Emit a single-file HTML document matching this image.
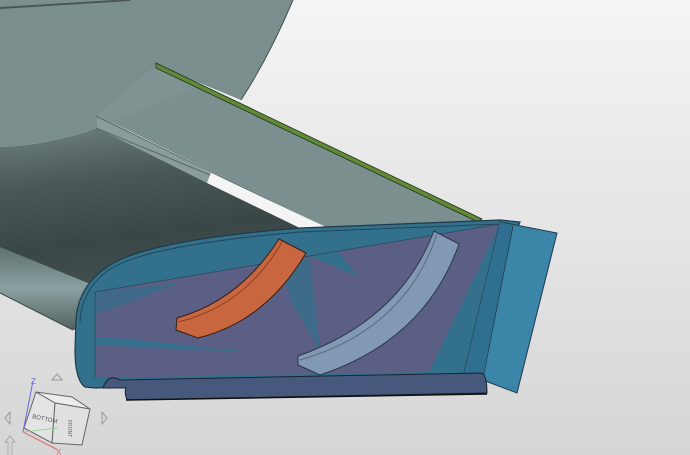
<!DOCTYPE html>
<html><head><meta charset="utf-8"><style>
html,body{margin:0;padding:0;width:690px;height:455px;overflow:hidden}
svg{display:block}
</style></head><body>
<svg width="690" height="455" viewBox="0 0 690 455" xmlns="http://www.w3.org/2000/svg" font-family="Liberation Sans, sans-serif">
<defs>
<linearGradient id="bg" x1="0" y1="0" x2="0" y2="1"><stop offset="0" stop-color="#f4f4f4"/><stop offset="1" stop-color="#d6d6d6"/></linearGradient>
<linearGradient id="dark" x1="0" y1="0" x2="0.2" y2="1"><stop offset="0" stop-color="#70827f"/><stop offset="0.3" stop-color="#4a5858"/><stop offset="0.6" stop-color="#3b4747"/><stop offset="1" stop-color="#485656"/></linearGradient>
<linearGradient id="strip" x1="0" y1="0" x2="0" y2="1"><stop offset="0" stop-color="#5e7070"/><stop offset="0.5" stop-color="#8aa0a0"/><stop offset="1" stop-color="#52625f"/></linearGradient>
</defs>
<rect width="690" height="455" fill="url(#bg)"/>
<!-- dark body -->
<path d="M0,147 Q50,145 97,128 L300,228 L200,300 L73,330 L0,293 Z" fill="url(#dark)"/>
<!-- lower cylinder strip -->
<path d="M0,247 L100,288 L73,330 L0,293 Z" fill="url(#strip)"/>
<path d="M0,293 L73,330" stroke="#3a4646" stroke-width="1"/>
<!-- fin -->
<path d="M0,0 L293,0 Q270,55 241,100 L156,65 L97,128 Q50,145 0,147 Z" fill="#7a8e8e"/>
<path d="M0,8 L130,0" stroke="#4a5656" stroke-width="2"/>
<path d="M293,0 Q270,55 241,100" stroke="#455050" stroke-width="1" fill="none"/>
<!-- wing upper surface -->
<path d="M97,115 L156,65 L482,221 L326,228 Z" fill="#7b8f8f"/>
<path d="M97,115 L156,65 L200,85 L97,128 Z" fill="#829696" opacity="0.6"/>
<path d="M97,115 L211,173 L207,183 L97,128 Z" fill="#8a9c9c"/>
<path d="M96,116 L326,228" stroke="#5a6a6a" stroke-width="1"/>
<path d="M96,128 L210,175" stroke="#5a6a6a" stroke-width="1"/>
<!-- white gap -->
<path d="M211,173 L326,227 L300,228 L207,183 Z" fill="#f4f4f4"/>
<!-- green edge -->
<path d="M156,63 L482,219 L478,222 L156,68 Z" fill="#5f8a3a" stroke="#263318" stroke-width="0.8"/>
<!-- blue panel -->
<path d="M85,387 Q75,380 75,350 L76,320 Q78,285 110,265 Q150,240 300,228 L500,220 L520,222 L464,373 L480,376 L95,388 Z" fill="#33708c" stroke="#1f3a48" stroke-width="1.2"/>
<path d="M80,322 Q82,287 112,268 Q150,245 300,232 L500,224" fill="none" stroke="#21465a" stroke-width="1"/>
<!-- purple region -->
<path d="M95,292 L500,224 L429,372 L95,378 Z" fill="#5b5e85"/>
<path d="M95,292 L180,283 L95,315 Z" fill="#3a6a8a" opacity="0.8"/>
<path d="M95,336 L250,352 L95,345 Z" fill="#33708c"/>
<path d="M95,322 L180,340 L95,338 Z" fill="#5b5e85"/>
<path d="M290,248 L338,252 L358,276 Z" fill="#33708c"/>
<path d="M280,258 L310,260 L320,350 L290,300 Z" fill="#33708c" opacity="0.7"/>
<path d="M95,292 L500,224" stroke="#2a4a60" stroke-width="0.8"/>
<path d="M95,292 L95,378" stroke="#2a4a60" stroke-width="0.8"/>
<!-- right flange -->
<path d="M500,222 L557,233 L517,393 L464,373 Z" fill="#3b86a8" stroke="#1e3a4a" stroke-width="1"/>
<path d="M500,222 L513,226 L482,378 L464,373 Z" fill="#2f6f90"/>
<path d="M513,226 L483,378" stroke="#1e3a4a" stroke-width="0.8"/>
<!-- orange part -->
<path d="M279,239 L306,253 Q265,322 198,338 L176,330 L177,318 Q240,300 279,239 Z" fill="#c8673f" stroke="#3a1c10" stroke-width="1"/>
<path d="M282,242 Q245,306 178,322" fill="none" stroke="#8a4026" stroke-width="1"/>
<!-- silver part -->
<path d="M434,231 L459,244 Q425,340 320,375 L298,365 L298,356 Q400,320 434,231 Z" fill="#8199b4" stroke="#2b3648" stroke-width="1"/>
<path d="M437,234 Q405,330 300,360" fill="none" stroke="#5a6a80" stroke-width="1"/>
<!-- bottom rail -->
<path d="M103,388 Q108,373 120,380 L482,373 Q487,376 487,393 L127,400 Q124,392 126,388 Z" fill="#46597c" stroke="#1a2230" stroke-width="1"/>
<path d="M126,400 L487,394" stroke="#111" stroke-width="1.5"/>
<!-- nav cube -->
<g stroke="#999" fill="none" stroke-width="1">
<path d="M52,380 L57,374 L62,380 Z"/>
<path d="M10,412 L5,418 L10,424 Z"/>
<path d="M102,412 L107,418 L102,424 Z"/>
</g>
<path d="M36,392 L72,397 L90,409 L55,403 Z" fill="#ececec" stroke="#666" stroke-width="1"/>
<path d="M36,392 L55,403 L52,443 L24,428 Z" fill="#e4e4e4" stroke="#666" stroke-width="1"/>
<path d="M55,403 L90,409 L82,445 L52,443 Z" fill="#e0e0e0" stroke="#666" stroke-width="1"/>
<text x="32" y="418" font-size="6" fill="#555" transform="rotate(12 32 418)">BOTTOM</text>
<text x="68" y="420" font-size="5" fill="#666" transform="rotate(90 68 420)">FRONT</text>
<path d="M33,381 L23,432" stroke="#6a6ae0" stroke-width="1"/>
<path d="M23,432 L58,450" stroke="#e06a6a" stroke-width="1"/>
<path d="M23,432 L58,428" stroke="#8ad08a" stroke-width="0.8"/>
<text x="31" y="384" font-size="8" fill="#6a6ae0">Z</text>
<text x="56" y="455" font-size="8" fill="#e06a6a">X</text>
<path d="M8,455 L8,442 L5,442 L10,436 L15,442 L12,442 L12,455" stroke="#aaa" fill="none"/>
</svg>
</body></html>
